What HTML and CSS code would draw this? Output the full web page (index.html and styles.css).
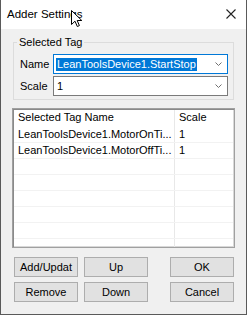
FILE: index.html
```html
<!DOCTYPE html>
<html>
<head>
<meta charset="utf-8">
<link rel="stylesheet" href="styles.css">
</head>
<body>
<div class="window">
  <div class="titlebar">
    <span class="title">Adder Settings</span>
    <svg class="close" width="10" height="10" viewBox="0 0 10 10"><path d="M0.5 0.5L9.5 9.5M9.5 0.5L0.5 9.5" stroke="#222" stroke-width="1.1" fill="none"/></svg>
    <svg class="cursor" width="12" height="18" viewBox="0 0 12 18"><path d="M0.5 0.5V14.5L4 11.2L6.3 16.5L8.4 15.6L6.2 10.5H10.8Z" fill="#fff" stroke="#000" stroke-width="1" stroke-linejoin="round"/></svg>
  </div>
  <div class="content">
    <fieldset class="group">
      <legend>Selected Tag</legend>
      <div class="field">
        <span class="label">Name</span>
        <div class="combo focused">
          <span class="sel">LeanToolsDevice1.StartStop</span>
          <svg class="chev" width="7" height="4" viewBox="0 0 7 4"><path d="M0.5 0.5L3.5 3.5L6.5 0.5" stroke="#707070" fill="none"/></svg>
        </div>
      </div>
      <div class="field">
        <span class="label">Scale</span>
        <div class="combo">
          <span class="val">1</span>
          <svg class="chev" width="7" height="4" viewBox="0 0 7 4"><path d="M0.5 0.5L3.5 3.5L6.5 0.5" stroke="#707070" fill="none"/></svg>
        </div>
      </div>
    </fieldset>
    <div class="list">
      <div class="row head"><div class="c1">Selected Tag Name</div><div class="c2">Scale</div></div>
      <div class="row"><div class="c1">LeanToolsDevice1.MotorOnTi...</div><div class="c2">1</div></div>
      <div class="row"><div class="c1">LeanToolsDevice1.MotorOffTi...</div><div class="c2">1</div></div>
      <div class="row"><div class="c1"></div><div class="c2"></div></div>
      <div class="row"><div class="c1"></div><div class="c2"></div></div>
      <div class="row"><div class="c1"></div><div class="c2"></div></div>
      <div class="row"><div class="c1"></div><div class="c2"></div></div>
      <div class="row"><div class="c1"></div><div class="c2"></div></div>
      <div class="row"><div class="c1"></div><div class="c2"></div></div>
    </div>
    <div class="buttons">
      <button class="btn">Add/Updat</button>
      <button class="btn">Up</button>
      <button class="btn right">OK</button>
      <button class="btn">Remove</button>
      <button class="btn">Down</button>
      <button class="btn right">Cancel</button>
    </div>
  </div>
</div>
</body>
</html>
```
FILE: styles.css
```css
html, body {
  margin: 0;
  padding: 0;
  background: #f0f0f0;
}
body {
  font-family: "Liberation Sans", Arial, sans-serif;
  font-size: 11px;
  color: #000;
}
.window {
  width: 247px;
  height: 315px;
  box-sizing: border-box;
  border: 1px solid #5a5a5a;
  border-top: none;
  display: flex;
  flex-direction: column;
  background: #f0f0f0;
}
.titlebar {
  position: relative;
  height: 29px;
  flex: none;
  background: #fff;
  display: flex;
  align-items: center;
  padding: 0 10px 2px 6px;
  box-sizing: border-box;
}
.title {
  font-size: 11.5px;
  flex: 1;
}
.close {
  margin-right: 0;
}
.cursor {
  position: absolute;
  left: 70px;
  top: 10px;
}
.content {
  flex: 1;
  display: flex;
  flex-direction: column;
  padding: 7px 12px 0 12px;
}
.group {
  margin: 0;
  padding: 5px 5px 3px 6px;
  border: 1px solid #dcdcdc;
  min-width: 0;
  display: flex;
  flex-direction: column;
  gap: 2px;
}
.group legend {
  padding: 0 2px;
  margin-left: -3px;
  line-height: 13px;
}
.field {
  display: flex;
  align-items: center;
  height: 20px;
}
.label {
  width: 33px;
  flex: none;
}
.combo {
  flex: 1;
  height: 20px;
  box-sizing: border-box;
  border: 1px solid #7a7a7a;
  background: #fff;
  display: flex;
  align-items: center;
  padding: 0 5px 0 2px;
}
.combo.focused {
  border-color: #0078d7;
}
.sel {
  background: #0078d7;
  color: #fff;
  line-height: 13px;
  padding: 0 1px;
}
.val {
  padding-left: 1px;
}
.chev {
  margin-left: auto;
}
.list {
  margin: 8px -1px 0 -1px;
  height: 140px;
  box-sizing: border-box;
  background: #fff;
  border: 1px solid #a0a0a0;
  box-shadow: inset 1px 1px 0 #8a8a8a, inset -1px -1px 0 #d8d8d8;
  padding: 1px;
  overflow: hidden;
}
.row {
  display: grid;
  grid-template-columns: 161px 1fr;
  height: 16px;
  border-bottom: 1px solid #f2f2f2;
  box-sizing: border-box;
}
.row.head {
  height: 17px;
  border-bottom: none;
}
.c1 {
  border-right: 1px solid #e8e8e8;
  padding-left: 4px;
  line-height: 15px;
  white-space: nowrap;
  overflow: hidden;
}
.c2 {
  padding-left: 4px;
  line-height: 15px;
}
.buttons {
  margin-top: 9px;
  display: grid;
  grid-template-columns: 64px 64px 1fr 64px;
  column-gap: 6px;
  row-gap: 5px;
  padding-left: 1px;
}
.btn {
  grid-column: auto;
  height: 20px;
  margin: 0;
  padding: 0;
  background: #e1e1e1;
  border: 1px solid #adadad;
  font-family: "Liberation Sans", Arial, sans-serif;
  font-size: 11px;
  color: #000;
  white-space: nowrap;
  overflow: hidden;
}
.btn.right {
  grid-column: 4;
}
```
